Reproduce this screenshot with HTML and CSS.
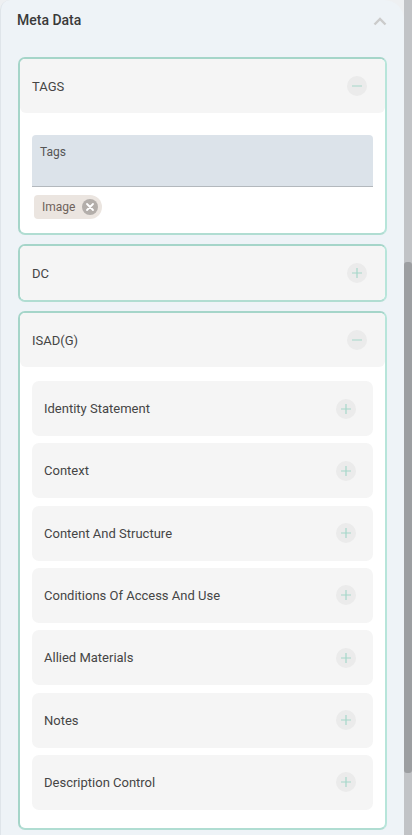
FILE: index.html
```html
<!DOCTYPE html>
<html>
<head>
<meta charset="utf-8">
<link rel="stylesheet" href="styles.css">
</head>
<body>
<div class="screen">
  <div class="panel">
    <div class="panel-head">
      <span class="panel-title">Meta Data</span>
      <svg class="chev" width="14" height="9" viewBox="0 0 14 9"><path d="M1.5 7.5 L7 2 L12.5 7.5" fill="none" stroke="#cbcbcb" stroke-width="2.4"/></svg>
    </div>

    <div class="card">
      <div class="card-head">
        <span class="card-title">TAGS</span>
        <span class="toggle"><svg width="20" height="20" viewBox="0 0 20 20"><path d="M5 10 H15" stroke="#a6d7ca" stroke-width="1.2"/></svg></span>
      </div>
      <div class="card-body tags-body">
        <div class="field"><span class="field-label">Tags</span></div>
        <div class="chips">
          <span class="chip">Image<span class="chip-x"><svg width="16" height="16" viewBox="0 0 16 16"><path d="M5 5 L11 11 M11 5 L5 11" stroke="#fff" stroke-width="1.8" stroke-linecap="round"/></svg></span></span>
        </div>
      </div>
    </div>

    <div class="card">
      <div class="card-head">
        <span class="card-title">DC</span>
        <span class="toggle"><svg width="20" height="20" viewBox="0 0 20 20"><path d="M5 10 H15 M10 5 V15" stroke="#a6d7ca" stroke-width="1.2"/></svg></span>
      </div>
    </div>

    <div class="card">
      <div class="card-head">
        <span class="card-title">ISAD(G)</span>
        <span class="toggle"><svg width="20" height="20" viewBox="0 0 20 20"><path d="M5 10 H15" stroke="#a6d7ca" stroke-width="1.2"/></svg></span>
      </div>
      <div class="card-body sections">
        <div class="section"><span>Identity Statement</span><span class="toggle"><svg width="20" height="20" viewBox="0 0 20 20"><path d="M5 10 H15 M10 5 V15" stroke="#a6d7ca" stroke-width="1.2"/></svg></span></div>
        <div class="section"><span>Context</span><span class="toggle"><svg width="20" height="20" viewBox="0 0 20 20"><path d="M5 10 H15 M10 5 V15" stroke="#a6d7ca" stroke-width="1.2"/></svg></span></div>
        <div class="section"><span>Content And Structure</span><span class="toggle"><svg width="20" height="20" viewBox="0 0 20 20"><path d="M5 10 H15 M10 5 V15" stroke="#a6d7ca" stroke-width="1.2"/></svg></span></div>
        <div class="section"><span>Conditions Of Access And Use</span><span class="toggle"><svg width="20" height="20" viewBox="0 0 20 20"><path d="M5 10 H15 M10 5 V15" stroke="#a6d7ca" stroke-width="1.2"/></svg></span></div>
        <div class="section"><span>Allied Materials</span><span class="toggle"><svg width="20" height="20" viewBox="0 0 20 20"><path d="M5 10 H15 M10 5 V15" stroke="#a6d7ca" stroke-width="1.2"/></svg></span></div>
        <div class="section"><span>Notes</span><span class="toggle"><svg width="20" height="20" viewBox="0 0 20 20"><path d="M5 10 H15 M10 5 V15" stroke="#a6d7ca" stroke-width="1.2"/></svg></span></div>
        <div class="section"><span>Description Control</span><span class="toggle"><svg width="20" height="20" viewBox="0 0 20 20"><path d="M5 10 H15 M10 5 V15" stroke="#a6d7ca" stroke-width="1.2"/></svg></span></div>
      </div>
    </div>
  </div>
  <div class="scrollbar"><div class="thumb"></div></div>
</div>
</body>
</html>
```

FILE: styles.css
```css
* { box-sizing: border-box; }
html, body { margin: 0; padding: 0; }
body {
  background: #eef0f2;
  font-family: Roboto, "Noto Sans", "Liberation Sans", sans-serif;
  color: #444;
}
.screen {
  display: flex;
  height: 835px;
  overflow: hidden;
}
.panel {
  flex: 1;
  background: #eef3f7;
  border-left: 1px solid #dfe5ea;
  border-radius: 10px 20px 0 0;
  padding: 0 17px 0 17px;
}
.panel-head {
  height: 57px;
  display: flex;
  align-items: flex-start;
  justify-content: space-between;
  padding: 11px 0 0 0;
}
.panel-title {
  font-size: 14px;
  font-weight: 500;
  color: #3a3a3a;
  line-height: 18px;
  margin-left: -1px;
}
.chev { margin-top: 6px; margin-right: 0; }
.card {
  border: 2px solid #abdace;
  border-color: #a5d5c9 #b7e5da #b0ddd2 #a5d5c9;
  border-radius: 7px;
  background: #fff;
  margin-bottom: 9px;
  overflow: hidden;
}
.card-head {
  height: 54px;
  background: #f5f5f5;
  border-radius: 0 0 6px 6px;
  display: flex;
  align-items: center;
  justify-content: space-between;
  padding: 0 18px 0 12px;
  font-size: 13px;
  color: #454545;
}
.toggle {
  width: 20px;
  height: 20px;
  border-radius: 50%;
  background: #ebebeb;
  display: flex;
}
.tags-body {
  padding: 22px 12px 14px 12px;
}
.field {
  height: 52px;
  background: #dce3ea;
  border-bottom: 1px solid #b3b8bd;
  border-radius: 4px 4px 0 0;
  padding: 6px 8px;
}
.field-label {
  font-size: 12px;
  color: #555;
}
.chips {
  padding-top: 8px;
  display: flex;
}
.chip {
  display: inline-flex;
  align-items: center;
  height: 24px;
  margin-left: 2px;
  padding: 0 4px 0 8px;
  background: #ebe5e0;
  border-radius: 4px 12px 12px 4px;
  font-size: 12px;
  color: #6e625b;
  gap: 7px;
}
.chip-x {
  width: 16px;
  height: 16px;
  border-radius: 50%;
  background: #b3aeaa;
  display: flex;
}
.sections {
  padding: 14px 12px 18px 12px;
  display: flex;
  flex-direction: column;
  gap: 7.33px;
}
.section {
  height: 55px;
  background: #f5f5f5;
  border-radius: 7px;
  display: flex;
  align-items: center;
  justify-content: space-between;
  padding: 0 17px 0 12px;
  font-size: 13px;
  color: #454545;
}
.scrollbar {
  width: 8px;
  background: #c1c3c6;
  padding-top: 262px;
}
.thumb {
  height: 511px;
  background: #9c9ea1;
  border-radius: 3px;
}
```
